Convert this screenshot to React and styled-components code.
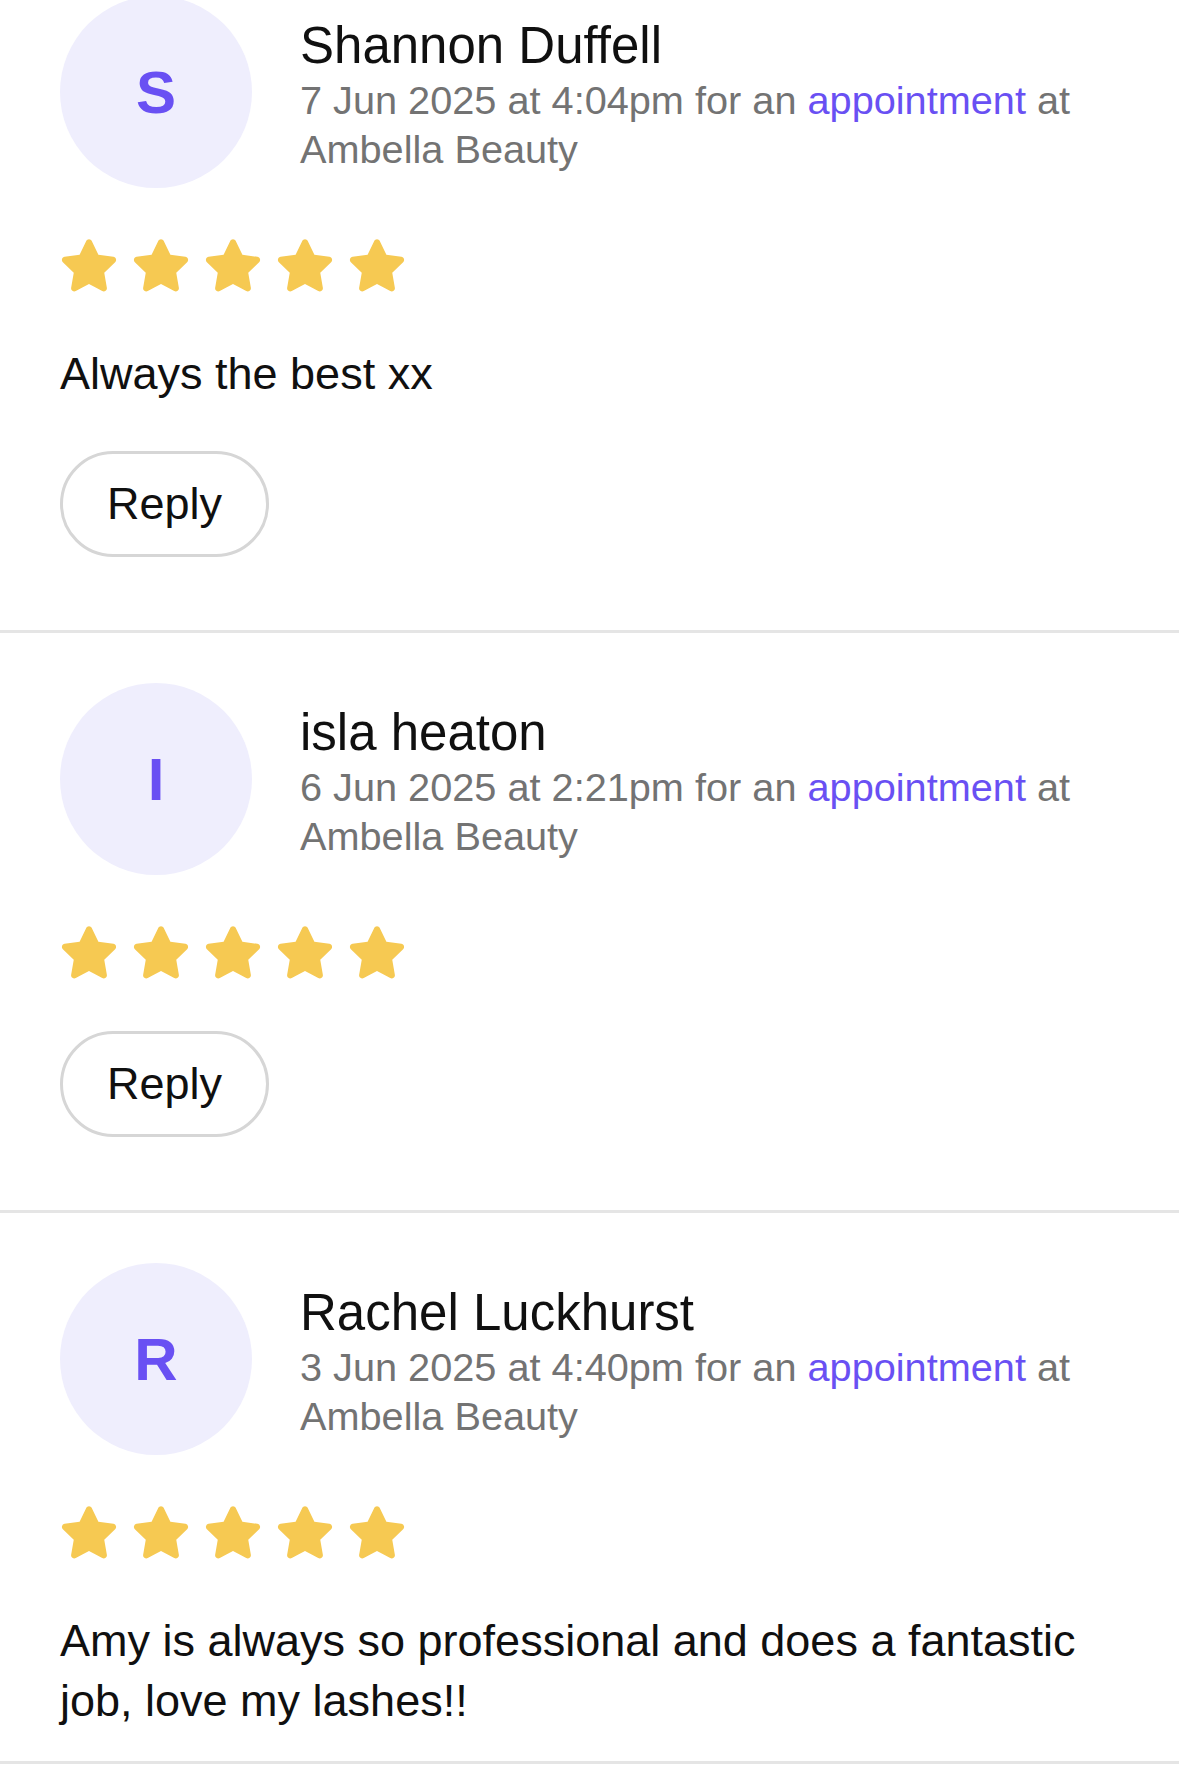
import React from 'react';
import styled, { createGlobalStyle } from 'styled-components';

const GlobalStyle = createGlobalStyle`
  html, body {
    margin: 0;
    padding: 0;
    background: #ffffff;
  }
  body {
    font-family: "Liberation Sans", Arial, sans-serif;
    color: #101010;
    overflow: hidden;
  }
`;

const List = styled.div`
  display: flex;
  flex-direction: column;
  margin-top: -54px;
`;

const Card = styled.article`
  display: flex;
  flex-direction: column;
  align-items: flex-start;
  gap: 52px;
  padding: 50px 40px ${(p) => (p.$tight ? '30px' : '73px')} 60px;
  border-bottom: 3px solid #e5e5e5;
`;

const Header = styled.div`
  display: flex;
  align-items: flex-start;
  gap: 48px;
  width: 100%;
`;

const Avatar = styled.div`
  flex: 0 0 auto;
  width: 192px;
  height: 192px;
  border-radius: 50%;
  background: #efeefd;
  color: #6950f3;
  display: flex;
  align-items: center;
  justify-content: center;
  font-size: 60px;
  font-weight: 700;
`;

const Info = styled.div`
  flex: 1;
  min-width: 0;
  display: flex;
  flex-direction: column;
  padding-top: 20px;
  padding-right: 20px;
`;

const Name = styled.div`
  font-size: 51px;
  line-height: 60px;
  color: #101010;
`;

const Meta = styled.div`
  font-size: 39.7px;
  line-height: 49px;
  color: #737373;
`;

const Link = styled.span`
  color: #6950f3;
`;

const Stars = styled.div`
  display: flex;
  gap: 8px;
  height: 52px;
  align-items: center;
  margin-left: -3px;
`;

const Body = styled.p`
  margin: 0;
  font-size: 45px;
  line-height: 60px;
  color: #101010;
`;

const ReplyButton = styled.button`
  font-family: inherit;
  font-size: 45px;
  color: #101010;
  background: #fff;
  border: 3px solid #d6d6d6;
  border-radius: 60px;
  height: 106px;
  padding: 0 44px;
  cursor: pointer;

  ${Body} + & {
    margin-top: -5px;
  }
`;

const Star = () => (
  <svg width="64" height="61" viewBox="0 0 24 23">
    <path
      d="M12 1.2c.45 0 .85.26 1.04.67l2.5 5.2 5.66.78c.45.06.82.38.96.81.14.43.02.9-.31 1.21l-4.1 3.97.98 5.66c.08.45-.1.9-.47 1.16-.37.27-.86.3-1.26.09L12 18.06l-5 2.69c-.4.21-.89.18-1.26-.09-.37-.26-.55-.71-.47-1.16l.98-5.66-4.1-3.97c-.33-.31-.45-.78-.31-1.21.14-.43.51-.75.96-.81l5.66-.78 2.5-5.2c.19-.41.59-.67 1.040-.67z"
      fill="#f6c952"
    />
  </svg>
);

const reviews = [
  {
    initial: 'S',
    name: 'Shannon Duffell',
    date: '7 Jun 2025 at 4:04pm',
    text: 'Always the best xx',
    reply: true,
  },
  {
    initial: 'I',
    name: 'isla heaton',
    date: '6 Jun 2025 at 2:21pm',
    reply: true,
  },
  {
    initial: 'R',
    name: 'Rachel Luckhurst',
    date: '3 Jun 2025 at 4:40pm',
    text: 'Amy is always so professional and does a fantastic job, love my lashes!!',
    reply: false,
  },
];

const Review = ({ review }) => (
  <Card $tight={!review.reply}>
    <Header>
      <Avatar>{review.initial}</Avatar>
      <Info>
        <Name>{review.name}</Name>
        <Meta>
          {review.date} for an <Link>appointment</Link> at Ambella Beauty
        </Meta>
      </Info>
    </Header>
    <Stars>
      {[0, 1, 2, 3, 4].map((i) => <Star key={i} />)}
    </Stars>
    {review.text && <Body>{review.text}</Body>}
    {review.reply && <ReplyButton>Reply</ReplyButton>}
  </Card>
);

export default function App() {
  return (
    <>
      <GlobalStyle />
      <List>
        {reviews.map((r) => <Review key={r.name} review={r} />)}
      </List>
    </>
  );
}
